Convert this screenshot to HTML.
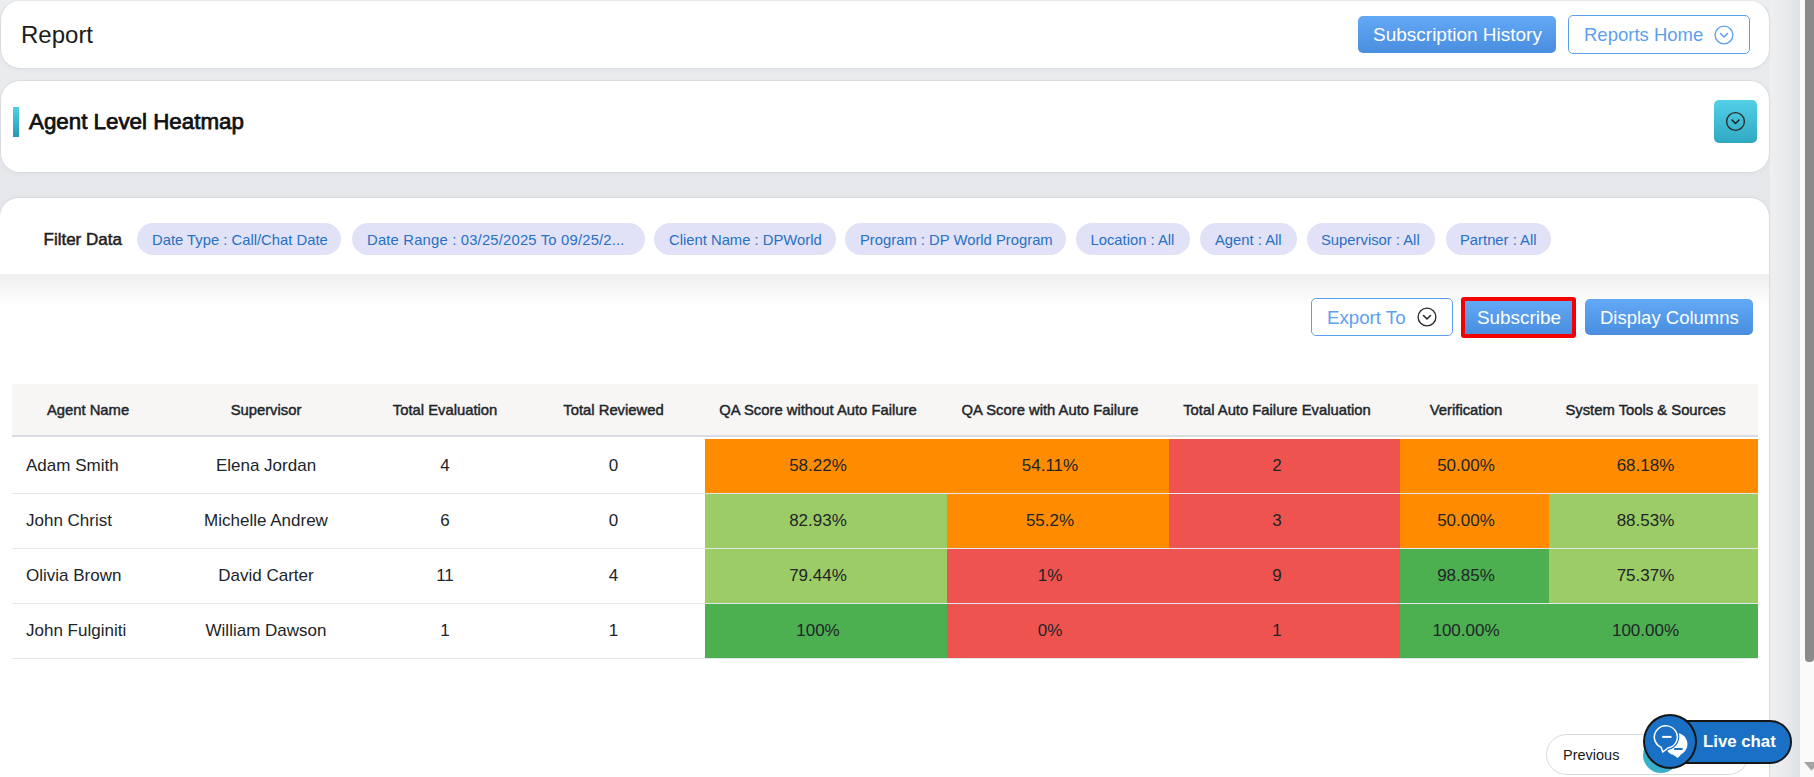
<!DOCTYPE html>
<html><head><meta charset="utf-8">
<style>
*{box-sizing:border-box;margin:0;padding:0}
html,body{width:1814px;height:777px;overflow:hidden}
body{background:linear-gradient(180deg,#eceef0 0,#e9eaed 100px,#e6e7ea 200px,#e6e7ea 100%);font-family:"Liberation Sans",sans-serif;color:#212529;position:relative}
.abs{position:absolute;white-space:nowrap}
.t{position:absolute;white-space:nowrap;line-height:1}
.card{position:absolute;left:0;width:1770px;background:#fff;border:1px solid #d9dde1;border-radius:20px;box-shadow:0 1px 5px rgba(0,0,0,.035)}
.btn{position:absolute;border-radius:5px;background:linear-gradient(180deg,#62a9f6,#4a8ddf)}
.obtn{position:absolute;border-radius:5px;border:1px solid #5d9ff0;background:#fff}
.chip{position:absolute;top:223px;height:32px;border-radius:16px;background:#e1e2f8}
.chipt{position:absolute;top:233px;font-size:14.8px;line-height:1;color:#2870c2;white-space:nowrap}
.circ{position:absolute;border:1.6px solid #555;border-radius:50%}
.th{position:absolute;top:403px;font-size:14.8px;font-weight:400;-webkit-text-stroke:.45px #212529;line-height:1;color:#212529;white-space:nowrap;text-align:center}
.td{position:absolute;font-size:17px;line-height:1;color:#212529;white-space:nowrap;text-align:center}
.cell{position:absolute}
.o{background:#ff8c00}.lg{background:#9ccc65}.g{background:#4caf50}.r{background:#ef5350}
.hl{position:absolute;left:12px;width:1746px;height:1px;background:#e4e6ed}
</style></head><body>

<div class="abs" style="left:1770px;top:0;width:30px;height:777px;background:linear-gradient(90deg,#eef0f2,#e8eaed 50%,#dfe2e5)"></div>
<!-- Card 1 -->
<div class="card" style="top:0;height:69px;border-top-color:#e6e8eb"></div>
<div class="t" style="left:21px;top:23.1px;font-size:24px;color:#1b1b1b">Report</div>
<div class="btn" style="left:1358px;top:16px;width:198px;height:37px"></div>
<div class="t" style="left:1373px;top:25.2px;font-size:19px;color:#fff">Subscription History</div>
<div class="obtn" style="left:1568px;top:15px;width:182px;height:39px"></div>
<div class="t" style="left:1584px;top:26.2px;font-size:18.5px;color:#5d9ff0">Reports Home</div>
<svg class="abs" style="left:1713px;top:24px" width="22" height="22" viewBox="0 0 22 22"><circle cx="11" cy="11" r="8.9" fill="none" stroke="#5d9ff0" stroke-width="1.35"/><path d="M7.5 9.5 L11 13 L14.5 9.5" fill="none" stroke="#5d9ff0" stroke-width="1.5" stroke-linecap="round" stroke-linejoin="round"/></svg>

<!-- Card 2 -->
<div class="card" style="top:80px;height:93px"></div>
<div class="abs" style="left:13px;top:107px;width:6px;height:30px;background:linear-gradient(180deg,#4fd0e8,#2a97b3)"></div>
<div class="t" style="left:29px;top:111px;font-size:22.35px;-webkit-text-stroke:.75px #111;color:#111">Agent Level Heatmap</div>
<div class="abs" style="left:1714px;top:100px;width:43px;height:43px;border-radius:5px;background:linear-gradient(180deg,#52d0e8,#30a8c2)"></div>
<svg class="abs" style="left:1724px;top:110px" width="23" height="23" viewBox="0 0 23 23"><circle cx="11.5" cy="11.5" r="8.9" fill="none" stroke="#2a2a2a" stroke-width="1.35"/><path d="M8 10 L11.5 13.5 L15 10" fill="none" stroke="#222" stroke-width="1.5" stroke-linecap="round" stroke-linejoin="round"/></svg>

<!-- Card 3 -->
<div class="card" style="top:197px;left:-1px;width:1771px;height:620px;overflow:hidden">
  <div class="abs" style="left:0;top:76px;width:1770px;height:32px;background:linear-gradient(180deg,#efefef,#fff)"></div>
</div>
<div class="t" style="left:43.5px;top:231.1px;font-size:17px;-webkit-text-stroke:.5px #222;color:#222">Filter Data</div>

<div class="chip" style="left:137px;width:204px"></div><div class="chipt" style="left:152px">Date Type : Call/Chat Date</div>
<div class="chip" style="left:352px;width:293px"></div><div class="chipt" style="left:367px;letter-spacing:.19px">Date Range : 03/25/2025 To 09/25/2...</div>
<div class="chip" style="left:654px;width:182px"></div><div class="chipt" style="left:669px">Client Name : DPWorld</div>
<div class="chip" style="left:845px;width:221px"></div><div class="chipt" style="left:860px">Program : DP World Program</div>
<div class="chip" style="left:1076px;width:114px"></div><div class="chipt" style="left:1090.5px">Location : All</div>
<div class="chip" style="left:1200px;width:97px"></div><div class="chipt" style="left:1215px">Agent : All</div>
<div class="chip" style="left:1307px;width:128px"></div><div class="chipt" style="left:1321px">Supervisor : All</div>
<div class="chip" style="left:1446px;width:105px"></div><div class="chipt" style="left:1460px">Partner : All</div>

<!-- toolbar -->
<div class="obtn" style="left:1311px;top:298px;width:142px;height:38px"></div>
<div class="t" style="left:1327px;top:309.4px;font-size:18.7px;color:#5d9ff0">Export To</div>
<svg class="abs" style="left:1416px;top:306px" width="22" height="22" viewBox="0 0 22 22"><circle cx="11" cy="11" r="8.9" fill="none" stroke="#2a2a2a" stroke-width="1.35"/><path d="M7.5 9.5 L11 13 L14.5 9.5" fill="none" stroke="#222" stroke-width="1.5" stroke-linecap="round" stroke-linejoin="round"/></svg>
<div class="abs" style="left:1461px;top:297px;width:115px;height:41px;border:4px solid #f50000;border-radius:3px;background:linear-gradient(180deg,#62a9f6,#4a8ddf)"></div>
<div class="t" style="left:1477px;top:309.4px;font-size:18.9px;color:#fff">Subscribe</div>
<div class="btn" style="left:1585px;top:299px;width:168px;height:36px"></div>
<div class="t" style="left:1600px;top:309.4px;font-size:18.5px;color:#fff">Display Columns</div>

<!-- table header -->
<div class="abs" style="left:12px;top:384px;width:1746px;height:51px;background:#f7f6f5"></div>
<div class="abs" style="left:12px;top:435px;width:1746px;height:2px;background:#d9dde1"></div>
<div class="th" style="left:-62px;width:300px">Agent Name</div>
<div class="th" style="left:116px;width:300px">Supervisor</div>
<div class="th" style="left:295px;width:300px">Total Evaluation</div>
<div class="th" style="left:463.5px;width:300px">Total Reviewed</div>
<div class="th" style="left:668px;width:300px">QA Score without Auto Failure</div>
<div class="th" style="left:900px;width:300px">QA Score with Auto Failure</div>
<div class="th" style="left:1127px;width:300px">Total Auto Failure Evaluation</div>
<div class="th" style="left:1316px;width:300px">Verification</div>
<div class="th" style="left:1495.5px;width:300px">System Tools &amp; Sources</div>
<div class="cell o" style="left:705px;top:439px;width:242px;height:54px"></div>
<div class="cell o" style="left:947px;top:439px;width:222px;height:54px"></div>
<div class="cell r" style="left:1169px;top:439px;width:231px;height:54px"></div>
<div class="cell o" style="left:1400px;top:439px;width:149px;height:54px"></div>
<div class="cell o" style="left:1549px;top:439px;width:209px;height:54px"></div>
<div class="hl" style="top:493px"></div>
<div class="td" style="left:26px;top:456.6px;text-align:left">Adam Smith</div>
<div class="td" style="left:116px;width:300px;top:456.6px">Elena Jordan</div>
<div class="td" style="left:295px;width:300px;top:456.6px">4</div>
<div class="td" style="left:463.5px;width:300px;top:456.6px">0</div>
<div class="td" style="left:668px;width:300px;top:456.6px">58.22%</div>
<div class="td" style="left:900px;width:300px;top:456.6px">54.11%</div>
<div class="td" style="left:1127px;width:300px;top:456.6px">2</div>
<div class="td" style="left:1316px;width:300px;top:456.6px">50.00%</div>
<div class="td" style="left:1495.5px;width:300px;top:456.6px">68.18%</div>
<div class="cell lg" style="left:705px;top:494px;width:242px;height:54px"></div>
<div class="cell o" style="left:947px;top:494px;width:222px;height:54px"></div>
<div class="cell r" style="left:1169px;top:494px;width:231px;height:54px"></div>
<div class="cell o" style="left:1400px;top:494px;width:149px;height:54px"></div>
<div class="cell lg" style="left:1549px;top:494px;width:209px;height:54px"></div>
<div class="hl" style="top:548px"></div>
<div class="td" style="left:26px;top:511.6px;text-align:left">John Christ</div>
<div class="td" style="left:116px;width:300px;top:511.6px">Michelle Andrew</div>
<div class="td" style="left:295px;width:300px;top:511.6px">6</div>
<div class="td" style="left:463.5px;width:300px;top:511.6px">0</div>
<div class="td" style="left:668px;width:300px;top:511.6px">82.93%</div>
<div class="td" style="left:900px;width:300px;top:511.6px">55.2%</div>
<div class="td" style="left:1127px;width:300px;top:511.6px">3</div>
<div class="td" style="left:1316px;width:300px;top:511.6px">50.00%</div>
<div class="td" style="left:1495.5px;width:300px;top:511.6px">88.53%</div>
<div class="cell lg" style="left:705px;top:549px;width:242px;height:54px"></div>
<div class="cell r" style="left:947px;top:549px;width:222px;height:54px"></div>
<div class="cell r" style="left:1169px;top:549px;width:231px;height:54px"></div>
<div class="cell g" style="left:1400px;top:549px;width:149px;height:54px"></div>
<div class="cell lg" style="left:1549px;top:549px;width:209px;height:54px"></div>
<div class="hl" style="top:603px"></div>
<div class="td" style="left:26px;top:566.6px;text-align:left">Olivia Brown</div>
<div class="td" style="left:116px;width:300px;top:566.6px">David Carter</div>
<div class="td" style="left:295px;width:300px;top:566.6px">11</div>
<div class="td" style="left:463.5px;width:300px;top:566.6px">4</div>
<div class="td" style="left:668px;width:300px;top:566.6px">79.44%</div>
<div class="td" style="left:900px;width:300px;top:566.6px">1%</div>
<div class="td" style="left:1127px;width:300px;top:566.6px">9</div>
<div class="td" style="left:1316px;width:300px;top:566.6px">98.85%</div>
<div class="td" style="left:1495.5px;width:300px;top:566.6px">75.37%</div>
<div class="cell g" style="left:705px;top:604px;width:242px;height:54px"></div>
<div class="cell r" style="left:947px;top:604px;width:222px;height:54px"></div>
<div class="cell r" style="left:1169px;top:604px;width:231px;height:54px"></div>
<div class="cell g" style="left:1400px;top:604px;width:149px;height:54px"></div>
<div class="cell g" style="left:1549px;top:604px;width:209px;height:54px"></div>
<div class="hl" style="top:658px"></div>
<div class="td" style="left:26px;top:621.6px;text-align:left">John Fulginiti</div>
<div class="td" style="left:116px;width:300px;top:621.6px">William Dawson</div>
<div class="td" style="left:295px;width:300px;top:621.6px">1</div>
<div class="td" style="left:463.5px;width:300px;top:621.6px">1</div>
<div class="td" style="left:668px;width:300px;top:621.6px">100%</div>
<div class="td" style="left:900px;width:300px;top:621.6px">0%</div>
<div class="td" style="left:1127px;width:300px;top:621.6px">1</div>
<div class="td" style="left:1316px;width:300px;top:621.6px">100.00%</div>
<div class="td" style="left:1495.5px;width:300px;top:621.6px">100.00%</div>

<!-- pagination / live chat -->
<div class="abs" style="left:1546px;top:734px;width:203px;height:41px;border:1px solid #d6dbe0;border-radius:21px;background:#fff"></div>
<div class="t" style="left:1563px;top:747.7px;font-size:14.5px;color:#1b1b1b">Previous</div>
<div class="abs" style="left:1643px;top:737px;width:36px;height:36px;border-radius:50%;background:#3aafc9"></div>
<div class="abs" style="left:1660px;top:720px;width:132px;height:44px;border:2.5px solid #161616;border-radius:22px;background:#1a70c4"></div>
<div class="abs" style="left:1643px;top:714px;width:54px;height:55px;border:2.5px solid #161616;border-radius:50%;background:#1a70c4"></div>
<svg class="abs" style="left:1643px;top:714px" width="55" height="55" viewBox="0 0 55 55">
<path d="M30.5,41 A11.2 11.2 0 1 1 38.6,40 L34.7,44 Z" fill="#fff"/>
<path d="M25,34 A11.5 11.2 0 1 0 18.1,33.2 L19.8,38 Z" fill="#1a70c4" stroke="#1a70c4" stroke-width="4" stroke-linejoin="round"/>
<path d="M25,34 A11.5 11.2 0 1 0 18.1,33.2 L19.8,38 Z" fill="#1a70c4" stroke="#fff" stroke-width="1.5" stroke-linejoin="round"/>
<path d="M19.2 22.9 H28.5" stroke="#fff" stroke-width="2"/>
<path d="M31.2 35 H39.6" stroke="#1a70c4" stroke-width="2"/>
</svg>
<div class="t" style="left:1703px;top:734.1px;font-size:16.8px;font-weight:700;color:#fff">Live chat</div>
<!-- scrollbar -->

<div class="abs" style="left:1800px;top:0;width:14px;height:777px;background:#fafafa"></div>
<div class="abs" style="left:1805px;top:0;width:9px;height:662px;border-radius:0 0 4px 4px;background:#8a8a8a"></div>
<svg class="abs" style="left:1804px;top:762px" width="10" height="10" viewBox="0 0 10 10"><path d="M0 0 L15 0 L7.5 8.8 Z" fill="#a3a3a3"/></svg>
</body></html>
